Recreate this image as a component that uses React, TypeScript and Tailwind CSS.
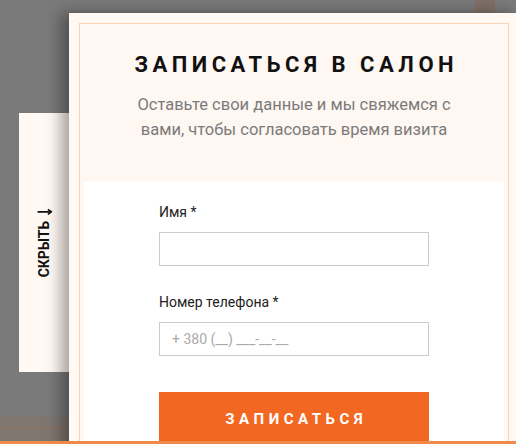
import React from "react";

const font = { fontFamily: '"Roboto", "Liberation Sans", sans-serif' };

const App = () => {
  return (
    <div
      className="relative w-[516px] h-[444px] overflow-hidden bg-[#7a7a7a]"
      style={font}
    >
      {/* page behind the overlay */}
      <div className="absolute left-[475px] top-0 w-[20px] h-[12px] bg-[#807067]" />
      <div className="absolute left-0 bottom-[3px] w-[120px] h-[24px] bg-[#7f7670]">
        <div className="mt-[11px] h-px bg-[#966d5b]" />
      </div>

      {/* modal */}
      <div className="absolute left-[19px] top-[13px] flex items-start">
        {/* side tab */}
        <div className="mt-[100px] w-[50px] h-[259px] bg-[#fff8f3] flex items-center justify-center">
          <div className="-rotate-90 flex items-center gap-[5px] whitespace-nowrap text-[14px] leading-[16px] font-bold text-[#111] uppercase">
            <span>Скрыть</span>
            <svg width="7" height="15" viewBox="0 0 7 15" fill="none" stroke="#111" strokeWidth="1.7">
              <path d="M3.5 0 V13" />
              <path d="M1 10.5 L3.5 14 L6 10.5" strokeLinejoin="miter" />
            </svg>
          </div>
        </div>

        {/* panel */}
        <div className="w-[450px] h-[440px] bg-[#fff8f3] p-[10px] shadow-[-8px_0_14px_rgba(0,0,0,0.35)]">
          <div className="h-full border border-[#f9d2b4] bg-[#fff7f2]">
            <div className="pt-[27px] h-[158px] text-center">
              <h2 className="text-[22px] leading-[28px] font-bold tracking-[4.5px] pl-[4.5px] text-[#111]">
                ЗАПИСАТЬСЯ В САЛОН
              </h2>
              <p className="mt-[13px] text-[16.5px] leading-[25px] text-[#7b7b7b]">
                Оставьте свои данные и мы свяжемся с<br />
                вами, чтобы согласовать время визита
              </p>
            </div>
            <div className="mx-[4px] bg-white h-[300px] pt-[21px] pl-[75px]">
              <label className="block text-[14px] leading-[18px] text-[#222]">Имя *</label>
              <input
                type="text"
                className="mt-[11px] block w-[270px] h-[34px] border border-[#cccccc] bg-white outline-none px-[12px] text-[14px]"
              />
              <label className="block mt-[27px] text-[14px] leading-[18px] text-[#222]">
                Номер телефона *
              </label>
              <input
                type="text"
                placeholder="+ 380 (__) ___-__-__"
                className="mt-[11px] block w-[270px] h-[34px] border border-[#cccccc] bg-white outline-none px-[12px] text-[14px] placeholder:text-[#aaaaaa]"
              />
              <button className="mt-[36px] block w-[270px] h-[56px] bg-[#f26722] text-white text-[15px] font-bold tracking-[4.5px] pl-[4.5px] pb-[2px]">
                ЗАПИСАТЬСЯ
              </button>
            </div>
          </div>
        </div>
      </div>

      {/* bottom orange line */}
      <div className="absolute left-0 bottom-0 w-full h-[3px] bg-[#f08a4b]" />
    </div>
  );
};

export default App;
